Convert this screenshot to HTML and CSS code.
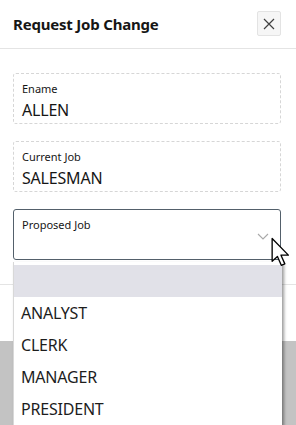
FILE: index.html
```
<!DOCTYPE html>
<html lang="en">
  <head>
    <meta charset="UTF-8" />
    <meta name="viewport" content="width=device-width, initial-scale=1.0" />
    <link rel="stylesheet" href="styles.css">
    <title>Request Job Change</title>
  </head>
  <body>
    <div class="dialog">
      <header class="dialog-head">
        <h1>Request Job Change</h1>
        <button class="close" aria-label="Close">
          <svg width="12" height="12" viewBox="0 0 12 12">
            <path d="M1 1L11 11M11 1L1 11" stroke="#404040" stroke-width="1.2" fill="none" />
          </svg>
        </button>
      </header>
      <div class="dialog-body">
        <div class="field readonly">
          <label>Ename</label>
          <div class="value">ALLEN</div>
        </div>
        <div class="field readonly">
          <label>Current Job</label>
          <div class="value">SALESMAN</div>
        </div>
        <div class="field select">
          <label>Proposed Job</label>
          <svg class="chevron" width="12" height="7" viewBox="0 0 12 7">
            <path d="M1 1L6 6L11 1" stroke="#a9a9a9" stroke-width="1.1" fill="none" />
          </svg>
          <ul class="listbox">
            <li class="active">&nbsp;</li>
            <li>ANALYST</li>
            <li>CLERK</li>
            <li>MANAGER</li>
            <li>PRESIDENT</li>
          </ul>
          <svg class="cursor" width="22" height="31" viewBox="0 0 14 21">
            <path d="M1 1L1 16.5L4.6 13.2L7.2 19.2L9.6 18.2L7 12.3L12 12.3Z"
              fill="#fff" stroke="#000" stroke-width="0.9" stroke-linejoin="round" />
          </svg>
        </div>
      </div>
      <footer class="dialog-foot"></footer>
    </div>
    <div class="backdrop"></div>
  </body>
</html>
```

FILE: styles.css
```
* {
  box-sizing: border-box;
  margin: 0;
  padding: 0;
  font-family: 'Noto Sans', 'Open Sans', Arial, sans-serif;
  --line: #e4e4e4;
  --dash: #d6d6d6;
  --text: #161616;
}

body {
  background-color: #fff;
  color: var(--text);
}

.dialog {
  background-color: #fff;
}

.dialog-head {
  display: flex;
  align-items: center;
  justify-content: space-between;
  height: 49px;
  padding: 0 15px 1px 13px;
  border-bottom: 1px solid var(--line);
}

h1 {
  font-size: 15px;
  font-weight: 700;
  letter-spacing: -0.2px;
}

.close {
  display: flex;
  align-items: center;
  justify-content: center;
  width: 24px;
  height: 25px;
  border: 1px solid #e3e3e3;
  border-radius: 2px;
  background-color: #f6f6f6;
}

.dialog-body {
  display: grid;
  gap: 17px;
  padding: 24px 15px 24px 13px;
}

.field {
  position: relative;
  height: 51px;
  padding: 7px 8px 0;
  border-radius: 3px;
}

.readonly {
  border: 1px dashed var(--dash);
}

.select {
  border: 1px solid #53606b;
}

label {
  display: block;
  font-size: 11px;
  line-height: 16px;
}

.value {
  margin-top: 2px;
  font-size: 16px;
  line-height: 22px;
  letter-spacing: -0.2px;
}

.chevron {
  position: absolute;
  right: 11px;
  top: 23px;
}

.listbox {
  position: absolute;
  z-index: 2;
  left: -1px;
  right: -2px;
  top: 52px;
  list-style: none;
  padding-top: 3px;
  background-color: #fff;
  border-left: 1px solid #d8d8d8;
  box-shadow: 2px 2px 3px rgba(0, 0, 0, 0.4);
}

.listbox li {
  height: 32px;
  padding-left: 7px;
  font-size: 16px;
  line-height: 32px;
  letter-spacing: -0.2px;
  color: #1d1d1d;
}

.listbox .active {
  background-color: #e1e1e8;
}

.cursor {
  position: absolute;
  z-index: 3;
  right: -12px;
  top: 27px;
}

.dialog-foot {
  height: 57px;
  border-top: 1px solid var(--line);
}

.backdrop {
  height: 100px;
  background-color: #c3c3c3;
}
```
